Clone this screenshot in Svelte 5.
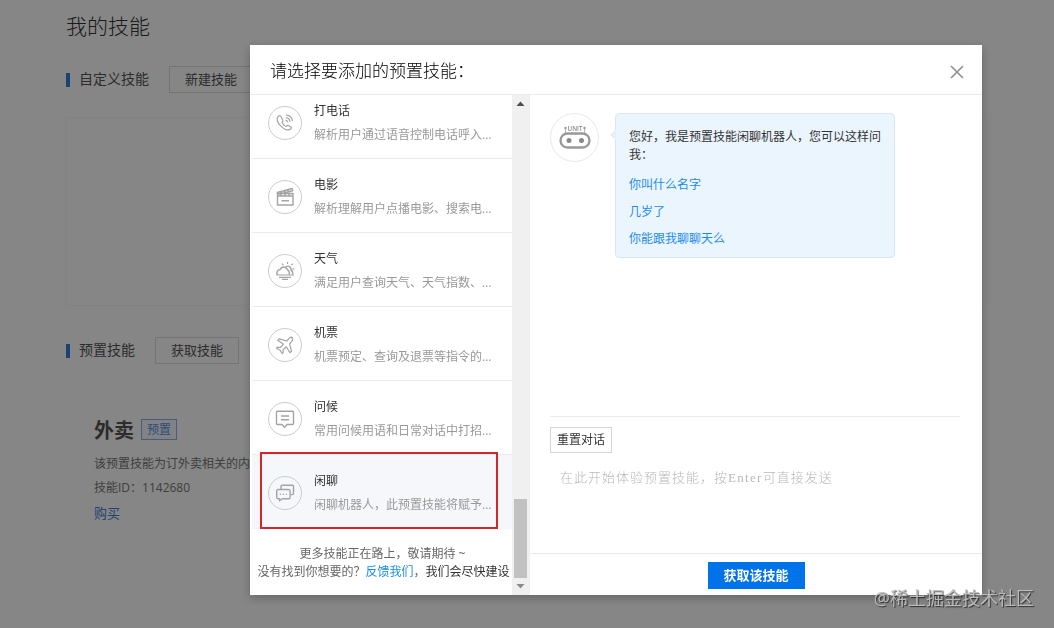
<script lang="ts">
  type Skill = {
    name: string;
    desc: string;
    icon: string;
  };

  const skills: Skill[] = [
    { name: "打电话", desc: "解析用户通过语音控制电话呼入...", icon: "phone" },
    { name: "电影", desc: "解析理解用户点播电影、搜索电...", icon: "movie" },
    { name: "天气", desc: "满足用户查询天气、天气指数、...", icon: "weather" },
    { name: "机票", desc: "机票预定、查询及退票等指令的...", icon: "plane" },
    { name: "问候", desc: "常用问候用语和日常对话中打招...", icon: "greet" },
    { name: "闲聊", desc: "闲聊机器人，此预置技能将赋予...", icon: "chat" }
  ];

  const questions = ["你叫什么名字", "几岁了", "你能跟我聊聊天么"];

  let selected = $state("闲聊");
</script>

<div class="page">
  <h1>我的技能</h1>

  <div class="section-head">
    <i class="bar"></i>
    <span>自定义技能</span>
    <button class="ghost">新建技能</button>
  </div>
  <div class="empty-card"></div>

  <div class="section-head">
    <i class="bar"></i>
    <span>预置技能</span>
    <button class="ghost">获取技能</button>
  </div>
  <div class="skill-card">
    <div class="skill-title">
      <strong>外卖</strong>
      <span class="tag">预置</span>
    </div>
    <p>该预置技能为订外卖相关的内容</p>
    <p>技能ID：1142680</p>
    <a class="buy" href="#buy">购买</a>
  </div>
</div>

<div class="mask">
  <div class="modal">
    <header>
      <h2>请选择要添加的预置技能：</h2>
      <button class="close" aria-label="关闭">
        <svg width="14" height="14" viewBox="0 0 14 14">
          <path d="M1 1l12 12M13 1L1 13" />
        </svg>
      </button>
    </header>

    <div class="body">
      <aside>
        <div class="list">
          {#each skills as skill}
            <button
              class="item"
              class:active={selected === skill.name}
              onclick={() => (selected = skill.name)}
            >
              <span class="icon">
                <svg width="20" height="20" viewBox="0 0 20 20">
                  {#if skill.icon === "phone"}
                    <path d="M3.300 3.200c-2.200 2-1.200 6.200 2.300 9.700s7.600 5.100 10.300 2.900c.7-.7.5-1.300-.1-1.800l-2-1.300c-.8-.5-1.400-.3-2 .5-.6.6-1.300.3-2.800-1.100S6.800 9.600 7.300 8.900c.8-.6.900-1.200.4-2L6.100 3.700c-.6-1.100-1.600-1.300-2.800-.5z" />
                    <path d="M10.500 7.200c1.200.1 1.900.8 2.100 2M10.800 4.700c2.300.2 3.900 1.700 4.200 4M11.200 2.200c3.500.3 5.900 2.600 6.300 6" />
                  {:else if skill.icon === "movie"}
                    <path class="bold" d="M2.500 9h15.500v9H2.500zM2.500 9V6.500h15.500V9M2.200 5.400L17 1.500l.7 2.200L3 7.300zM6.500 13.700h7.500" />
                    <path class="bold" d="M5 4.800l2.200 1.500M8.500 3.800l2.200 1.500M12 2.800l2.200 1.500M7 6.500L5 9M11 6.500L9 9M15 6.500L13 9" />
                  {:else if skill.icon === "weather"}
                    <path class="bold" d="M2.300 13.700C1 10.500 3 8.300 5.400 8.500 6.300 5.300 10.800 5.100 12.300 8.700c1.600 1 2.300 2.700 2.100 5M10.700 6.200c2-2.300 6-.4 5.200 2.800 1.600.8 2.100 2.600 1.700 4.700" />
                    <path d="M1 14h18M4 16.300h12M7 18.300h6" />
                    <path d="M12.500 1v2M7 2.700l1.400 1.400M17.800 2.700l-1.500 1.400M17.300 8h2.200" />
                  {:else if skill.icon === "plane"}
                    <path d="M17.300 2.500c-1-.6-2.300.1-3.100.9L11.700 6 4.200 3.800 2.700 5.300l5.800 3.900-3.100 3.300-3-.3-1 1 3.800 2 2 3.500 1-1-.2-2.900 3.400-3 3.500 5.900 1.600-1.500-1.900-7.400 2.300-2.600c.9-1.100 1-2.700-.6-3.700z" />
                  {:else if skill.icon === "greet"}
                    <path class="bold" d="M2.500 2.300h15a1 1 0 011 1v11.200a1 1 0 01-1 1H12l-2.500 2.700L7 15.500H2.500a1 1 0 01-1-1V3.300a1 1 0 011-1z" />
                    <path class="bold" d="M6 7h8M6 10.700h8" />
                  {:else}
                    <path class="bold" d="M6 6V3.300a1 1 0 011-1h10.500a1 1 0 011 1v7.300a1 1 0 01-1 1H16" />
                    <path class="bold" d="M3 6.500h10.800a1.300 1.300 0 011.300 1.300v6.600a1.300 1.300 0 01-1.300 1.300H7.300l-2.700 2.100v-2.100H3a1.300 1.300 0 01-1.300-1.300V7.800A1.300 1.300 0 013 6.500zM4.800 11.200h1M7.800 11.200h1M10.800 11.200h1" />
                  {/if}
                </svg>
              </span>
              <span class="info">
                <span class="name">{skill.name}</span>
                <span class="desc">{skill.desc}</span>
              </span>
            </button>
          {/each}
          <div class="more">
            <div>更多技能正在路上，敬请期待 ~</div>
            <div>没有找到你想要的？<a href="#feedback">反馈我们</a>，<em>我们会尽快建设</em></div>
          </div>
          <div class="highlight"></div>
        </div>
        <div class="scrollbar">
          <svg width="9" height="5" viewBox="0 0 9 5"><path d="M0.500 5h8l-4-4.500z" fill="#4c4c4c" /></svg>
          <div class="thumb"></div>
          <svg width="9" height="5" viewBox="0 0 9 5"><path d="M0.500 0h8l-4 4.500z" fill="#8a8a8a" /></svg>
        </div>
      </aside>

      <main>
        <div class="chat">
          <div class="avatar">
            <svg width="34" height="28" viewBox="0 0 34 28">
              <text x="17" y="6.500" text-anchor="middle" textLength="15" lengthAdjust="spacingAndGlyphs">UNIT</text>
              <path d="M7.500 4v5M26.500 4v5" stroke="#b5b5b5" />
              <circle cx="7.500" cy="4" r="1.200" fill="#999" />
              <circle cx="26.500" cy="4" r="1.200" fill="#999" />
              <rect x="2.500" y="9.500" width="29" height="14" rx="7" fill="none" stroke="#999" stroke-width="2.300" />
              <circle cx="11" cy="16.500" r="2.500" fill="#888" />
              <circle cx="23.500" cy="16.500" r="2.500" fill="#888" />
            </svg>
          </div>
          <div class="bubble">
            <p>您好，我是预置技能闲聊机器人，您可以这样问我：</p>
            {#each questions as question}
              <a href="#ask">{question}</a>
            {/each}
          </div>
        </div>
        <div class="input">
          <button class="reset">重置对话</button>
          <div class="placeholder">在此开始体验预置技能，按<span>Enter</span>可直接发送</div>
        </div>
        <footer>
          <button class="primary">获取该技能</button>
        </footer>
      </main>
    </div>
  </div>
</div>

<div class="watermark">@稀土掘金技术社区</div>

<style>
  :global(body) {
    overflow: hidden;
    background: #fff;
    font-family: "Open Sans", "Noto Sans CJK SC", sans-serif;
    font-size: 12px;
    color: #333;
  }

  h1,
  h2,
  p {
    margin: 0;
    font-weight: 300;
  }

  a {
    color: #1a8cec;
    text-decoration: none;
  }

  button {
    box-sizing: border-box;
    padding: 0;
    border: 0;
    background: none;
    color: inherit;
    font-family: inherit;
  }

  .page {
    box-sizing: border-box;
    height: 628px;
    padding: 11px 66px 0;
    overflow: hidden;
  }

  h1 {
    height: 55px;
    font-size: 21px;
    line-height: 30px;
  }

  .section-head {
    display: flex;
    align-items: center;
    height: 27px;
    font-size: 14px;
    color: #555;
  }

  .section-head span {
    height: 27px;
    line-height: 26px;
  }

  .bar {
    width: 4px;
    height: 14px;
    margin-right: 9px;
    background: #3480d8;
  }

  .ghost {
    width: 84px;
    height: 27px;
    margin-left: 20px;
    padding-bottom: 2px;
    border: 1px solid #dcdcdc;
    font-size: 13px;
    line-height: 22px;
  }

  .empty-card {
    height: 187px;
    margin: 24px 0 31px;
    border: 1px solid #f8f8f8;
  }

  .skill-card {
    padding: 51px 28px 0;
    color: #777;
  }

  .skill-title {
    display: flex;
    align-items: center;
    height: 28px;
    margin-bottom: 9px;
  }

  .skill-title strong {
    padding-top: 3px;
    font-size: 20px;
    line-height: 28px;
    color: #555;
  }

  .tag {
    box-sizing: border-box;
    width: 36px;
    height: 21px;
    margin-left: 7px;
    border: 1px solid #8cb0e6;
    background: #f4f8ff;
    color: #5a91e2;
    line-height: 19px;
    text-align: center;
  }

  .skill-card p {
    line-height: 24px;
    font-weight: 400;
  }

  .buy {
    display: block;
    margin-top: 3px;
    color: #3f80d8;
    font-size: 13px;
    line-height: 20px;
  }

  .mask {
    position: fixed;
    inset: 0;
    padding: 45px 72px 33px 250px;
    background: rgba(0, 0, 0, 0.475);
  }

  .modal {
    display: flex;
    flex-direction: column;
    height: 550px;
    background: #fff;
    box-shadow: 0 3px 10px rgba(0, 0, 0, 0.25);
  }

  header {
    display: flex;
    flex-shrink: 0;
    box-sizing: border-box;
    align-items: center;
    justify-content: space-between;
    height: 50px;
    padding: 4px 18px 0 20px;
    border-bottom: 1px solid #ebebeb;
  }

  h2 {
    margin-top: -5px;
    color: #000;
    font-size: 17px;
  }

  .close {
    width: 14px;
    height: 14px;
  }

  .close svg {
    display: block;
    fill: none;
    stroke: #8b8e93;
    stroke-width: 1.6;
  }

  .body {
    display: flex;
    flex: 1;
    min-height: 0;
  }

  aside {
    display: flex;
    width: 280px;
    overflow: hidden;
  }

  .list {
    position: relative;
    width: 262px;
    margin-top: -10px;
  }

  .item {
    display: flex;
    align-items: center;
    width: 260px;
    height: 74px;
    margin-left: 2px;
    padding: 3px 0 0 16px;
    border-bottom: 1px solid #ebebeb;
    text-align: left;
  }

  .item.active {
    border-bottom-color: #f5f7fb;
    background: #f5f7fb;
  }

  .icon {
    display: flex;
    box-sizing: border-box;
    align-items: center;
    justify-content: center;
    width: 34px;
    height: 34px;
    margin-right: 12px;
    border: 1px solid #ccc;
    border-radius: 50%;
  }

  .icon svg {
    fill: none;
    stroke: #a4a4a4;
    stroke-linejoin: round;
    stroke-width: 1.2;
  }

  .icon .bold {
    stroke-width: 1.4;
  }

  .info {
    display: flex;
    flex-direction: column;
    font-size: 12px;
    line-height: 24px;
    white-space: nowrap;
  }

  .desc {
    color: #999;
  }

  .more {
    padding-top: 15px;
    color: #666;
    line-height: 19px;
    text-align: center;
    white-space: nowrap;
  }

  .more div {
    margin-left: 3px;
  }

  .more div + div {
    margin-left: 5px;
    line-height: 18px;
  }

  .more em {
    color: #333;
    font-style: normal;
  }

  /* frame over the chosen skill */
  .highlight {
    position: absolute;
    top: 367px;
    left: 10px;
    box-sizing: border-box;
    width: 238px;
    height: 77px;
    border: 2px solid #d3272d;
    pointer-events: none;
  }

  .scrollbar {
    display: flex;
    box-sizing: border-box;
    flex-direction: column;
    align-items: center;
    width: 18px;
    padding: 6px 2px 6px 0;
    background: #f0f0f0;
  }

  .thumb {
    width: 13px;
    height: 79px;
    margin: auto 0 6px;
    background: #c1c1c1;
  }

  main {
    display: flex;
    flex: 1;
    flex-direction: column;
  }

  .chat {
    display: flex;
    align-items: flex-start;
    height: 303px;
    padding: 18px 0 0 20px;
  }

  .avatar {
    display: flex;
    box-sizing: border-box;
    align-items: center;
    justify-content: center;
    width: 49px;
    height: 49px;
    margin-right: 16px;
    border: 1px solid #e8e8e8;
    border-radius: 50%;
  }

  .avatar text {
    fill: #888;
    font-family: "Open Sans", sans-serif;
    font-size: 7px;
    font-weight: 600;
  }

  .bubble {
    position: relative;
    box-sizing: border-box;
    width: 280px;
    height: 145px;
    padding: 14px 13px 0;
    border: 1px solid #dbe7f0;
    border-radius: 4px;
    background: #ebf5fd;
  }

  .bubble::before {
    position: absolute;
    top: 15px;
    left: -6px;
    border: 6px solid transparent;
    border-right-color: #e5f0f8;
    border-left: 0;
    content: "";
  }

  .bubble p {
    margin-bottom: 7px;
    font-weight: 400;
    line-height: 18px;
  }

  .bubble a {
    display: block;
    line-height: 27px;
  }

  .input {
    flex: 1;
    margin: 0 22px 0 20px;
    padding-top: 10px;
    border-top: 1px solid #ebebeb;
  }

  .reset {
    display: block;
    width: 62px;
    height: 26px;
    border: 1px solid #d5d5d5;
    font-size: 12px;
    line-height: 22px;
  }

  .placeholder {
    padding: 14px 10px;
    color: #b8b8b8;
    font-family: "Noto Sans CJK SC", sans-serif;
    font-size: 13px;
    font-weight: 300;
    letter-spacing: 1px;
    line-height: 20px;
  }

  .placeholder span {
    font-family: "Liberation Serif", serif;
    letter-spacing: 1.3px;
  }

  footer {
    display: flex;
    box-sizing: border-box;
    justify-content: center;
    height: 42px;
    padding-top: 8px;
    border-top: 1px solid #ebebeb;
  }

  .primary {
    width: 97px;
    height: 27px;
    padding-bottom: 2px;
    background: #0073eb;
    color: #fff;
    font-size: 13px;
    font-weight: 700;
    line-height: 24px;
  }

  .watermark {
    position: fixed;
    right: 20px;
    bottom: 17px;
    color: rgba(190, 190, 190, 0.95);
    font-size: 18px;
    line-height: 26px;
    text-shadow: 1px 1px 1px rgba(0, 0, 0, 0.65);
  }
</style>
